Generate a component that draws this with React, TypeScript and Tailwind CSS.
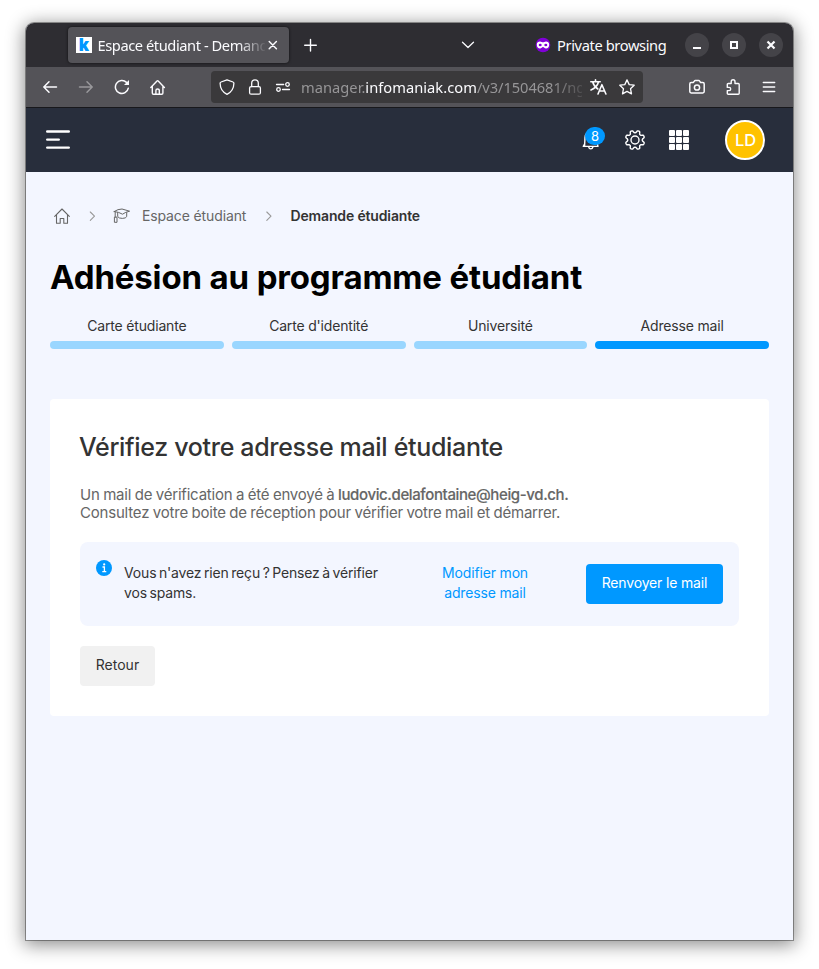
import React from "react";

type IconProps = { className?: string; w: number; h?: number; sw?: number; children: React.ReactNode };

function Icon({ className = "", w, h = w, sw = 1.3, children }: IconProps) {
  return (
    <svg
      className={`shrink-0 ${className}`}
      width={w}
      height={h}
      viewBox={`0 0 ${w} ${h}`}
      fill="none"
      stroke="currentColor"
      strokeWidth={sw}
      strokeLinecap="round"
      strokeLinejoin="round"
    >
      {children}
    </svg>
  );
}

// Outline of an eight-toothed cog with a notch pointing straight up.
const cog =
  "M" +
  Array.from({ length: 128 }, (_, i) => {
    const a = (i / 128) * Math.PI * 2;
    const wave = Math.tanh(-1.8 * Math.cos(8 * a)) / Math.tanh(1.8);
    const r = 8.5 + 1.2 * wave;
    return `${(11 + r * Math.cos(a)).toFixed(2)} ${(11 + r * Math.sin(a)).toFixed(2)}`;
  }).join("L") +
  "Z";

function TabStrip() {
  return (
    <div className="flex h-11 items-center bg-[#2e2d32] pl-[42px] text-[#fbfbfe]">
      <div className="flex h-9 w-[221px] items-center rounded bg-[#545358] pl-2 shadow-[0_0_3px_rgba(0,0,0,0.7)]">
        <div className="flex size-4 items-center justify-center bg-white font-['Inter'] text-[17px] leading-none font-black text-[#0098ff]">
          k
        </div>
        <div className="ml-[5.5px] w-[167.5px] text-[14.67px] leading-5 tracking-[-0.43px] whitespace-nowrap [mask-image:linear-gradient(to_right,black_140px,transparent_169px)]">
          Espace étudiant - Demand
        </div>
        <Icon w={16} sw={1.5}>
          <path d="M4.200 4.500l7.200 7.200M11.400 4.500l-7.200 7.200" />
        </Icon>
      </div>
      <Icon w={16} className="ml-[13px]" sw={1.4}>
        <path d="M8.500 2.500v11.500M2.700 8.300h11.600" />
      </Icon>
      <Icon w={16} className="ml-[142px]">
        <path d="M2.500 5.200L8 10.500l5.500-5.300" />
      </Icon>
      <svg className="ml-[59px] shrink-0" width="16" height="16" viewBox="0 0 16 16">
        <circle cx="8" cy="8" r="7.300" fill="#8000d7" />
        <path
          d="M1.800 7.500C1.800 5.300 3.300 4.400 5 4.400c1.400 0 2 .8 3 .8s1.600-.8 3-.8c1.700 0 3.200.9 3.200 3.100C14.200 10 12.800 11.600 11 11.600c-1.500 0-2-1.500-3-1.500s-1.500 1.500-3 1.500C3.200 11.600 1.800 10 1.800 7.500z"
          fill="white"
        />
        <ellipse cx="5.200" cy="8" rx="1.500" ry="1.300" fill="#8000d7" />
        <ellipse cx="10.800" cy="8" rx="1.500" ry="1.300" fill="#8000d7" />
      </svg>
      <div className="ml-[6px] w-[110px] text-[14.67px] leading-5 tracking-[-0.38px] whitespace-nowrap">Private browsing</div>
      <div className="ml-[18px] flex gap-[13px]">
        <div className="flex size-6 items-center justify-center rounded-full bg-[#444348]">
          <Icon w={16} sw={2}>
            <path d="M4 11h8" strokeLinecap="butt" />
          </Icon>
        </div>
        <div className="flex size-6 items-center justify-center rounded-full bg-[#444348]">
          <Icon w={16} sw={2}>
            <path d="M5 5h6v6H5z" strokeLinejoin="miter" />
          </Icon>
        </div>
        <div className="flex size-6 items-center justify-center rounded-full bg-[#444348]">
          <Icon w={16} sw={2.2}>
            <path d="M4.500 4.500l7 7M11.500 4.500l-7 7" strokeLinecap="butt" />
          </Icon>
        </div>
      </div>
    </div>
  );
}

function NavBar() {
  return (
    <div className="flex h-10 items-center bg-[#545358] pl-4 text-[#fbfbfe]">
      <div className="flex gap-5">
        <Icon w={16} sw={1.5}>
          <path d="M14.500 8H2M7 2.800L1.800 8L7 13.200" />
        </Icon>
        <Icon w={16} sw={1.5} className="text-[#99989b]">
          <path d="M1.500 8H14M9 2.800L14.200 8L9 13.200" />
        </Icon>
        <Icon w={16} sw={1.5}>
          <path d="M14.300 9.200A6.500 6.500 0 1 1 12.500 3.400" />
          <path d="M15 1v5h-5z" fill="currentColor" stroke="none" />
        </Icon>
        <Icon w={16} sw={1.4}>
          <path d="M.8 8.600L7 1.900q.6-.6 1.200 0L14.400 8.600M2.300 7.400v6.700q0 1.200 1.200 1.200h8.200q1.200 0 1.200-1.200V7.400M5.900 15.200v-3.700q0-1.500 1.700-1.500t1.700 1.500v3.700" />
        </Icon>
      </div>
      <div className="ml-[45px] flex h-8 w-[432px] items-center rounded bg-[#3a393b] pl-2">
        <Icon w={16} className="mr-3">
          <path d="M8 .8L14 3q.9.300.9 1.300C14.800 9.500 12.300 13.300 8 15.300C3.700 13.300 1.200 9.500 1.100 4.300q0-1 .9-1.300z" />
        </Icon>
        <Icon w={16} className="mr-3">
          <rect x="2.600" y="7.600" width="10.800" height="7.600" rx="1.500" />
          <path d="M4.700 7.500V4.100a3.300 3.300 0 0 1 6.600 0v3.400" />
        </Icon>
        <Icon w={16} className="mr-[10px]">
          <path d="M1.500 5.500h7.200M7.500 10.500h7" />
          <circle cx="12.500" cy="5.500" r="1.800" />
          <circle cx="3.500" cy="10.500" r="1.800" />
        </Icon>
        <div className="w-[281px] text-[14.67px] leading-5 tracking-[0.03px] whitespace-nowrap text-[#969597] [mask-image:linear-gradient(to_right,black_250px,transparent_290px)]">
          manager.<span className="text-[#fbfbfe]">infomaniak.com</span>
          <span className="tracking-[-0.05px]">/v3/1504681/ng</span>
        </div>
        <Icon w={17} h={16} className="ml-[8px] mr-3" sw={1.600}>
          <path d="M.8 2.700h9.400M5.500.800v1.900M8.500 3C7.700 6 4.500 9.500 1 11M2.700 3C3.500 6 5.500 8.500 7.800 10M8 15l3.900-9.300L15.900 15M9.300 12h5.300" />
        </Icon>
        <Icon w={16}>
          <path d="M8 .900l2.200 4.700 5 .6-3.700 3.500 1 5.200L8 12.400 3.500 14.900l1-5.200L.8 6.200l5-.6z" />
        </Icon>
      </div>
      <div className="ml-[46px] flex gap-5">
        <Icon w={16} sw={1.5}>
          <path d="M.8 5q0-1.400 1.400-1.400h2L5.300 2.200q.4-.7 1.100-.7h3.200q.7 0 1.100.7l.9 1.400h2.200Q15.200 3.600 15.200 5v7.600q0 1.400-1.400 1.400H2.200Q.8 14 .8 12.600z" />
          <circle cx="8" cy="8.500" r="2.600" />
        </Icon>
        <Icon w={16} sw={1.4}>
          <path d="M6.200 4.500V2.700a1.900 1.900 0 0 1 3.800 0V4.500h3.200q1 0 1 1v8.700q0 1-1 1H3.300q-1 0-1-1v-2.600h1.800a1.600 1.600 0 0 0 0-3.200H2.300V5.500q0-1 1-1z" />
        </Icon>
        <Icon w={16} sw={1.4}>
          <path d="M2.300 3.500h11.400M2.300 8h11.400M2.300 12.500h11.400" />
        </Icon>
      </div>
    </div>
  );
}

function AppHeader() {
  return (
    <div className="flex h-[65px] items-center border-t border-[#18181c] bg-[#282e3c] pl-5 text-white">
      <Icon w={24} sw={2.400}>
        <path d="M1.200 3.500h21.600M1.200 11.600h11.600M1.200 19.600h21.600" />
      </Icon>
      <div className="relative ml-[511px] flex h-6 w-6 items-center">
        <Icon w={20} h={22} sw={1.400}>
          <path d="M3.600 16.500L4 8.500a6 6 0 0 1 12 0v5.200l1 3.700H2.300l1.400-2.500M7.500 17.700q.5 2.200 2.300 2.200t2.300-2.200" />
        </Icon>
        <div className="absolute top-[-1px] left-1 flex h-[18px] w-5 items-center justify-center rounded-full bg-[#0098ff] font-['Inter'] text-[13px] leading-4">
          8
        </div>
      </div>
      <Icon w={22} className="mb-[1px] ml-[19px]" sw={1.400}>
        <circle cx="11" cy="11" r="4" />
        <path d={cog} />
      </Icon>
      <div className="ml-[23px] grid grid-cols-3 gap-[1.5px]">
        {Array.from({ length: 9 }, (_, i) => (
          <div key={i} className="size-[5.7px] rounded-[1px] bg-white" />
        ))}
      </div>
      <div className="ml-9 flex size-10 items-center justify-center rounded-full border-2 border-white bg-[#ffc200] pl-px font-['Inter'] text-[16.5px] font-medium">
        LD
      </div>
    </div>
  );
}

function Breadcrumb() {
  return (
    <div className="flex h-6 items-center text-sm text-[#666]">
      <Icon w={16} className="ml-1" sw={1.1}>
        <path d="M.7 8.300L8 1l7.300 7.300M2.500 7v8.300h3.700v-4.800h3.600v4.800h3.700V7" />
      </Icon>
      <Icon w={8} h={12} className="ml-[18px] text-[#999]" sw={1.1}>
        <path d="M2.300 2L6.500 6.200 2.300 10.400" />
      </Icon>
      <Icon w={18} h={16} className="ml-[17px]" sw={1}>
        <path d="M1.200 3.500Q5 1 9 1l7.600 2.200Q12.500 4 9.500 6.200 6 4 1.200 3.500zM4.700 4.600v4q1 1.800 4.600 1.800t4.400-1.800V4.600M2.200 4v5.200M1.400 9.500v4.800h2.600V9.500z" />
      </Icon>
      <span className="ml-[11px] w-[105px] tracking-[-0.13px] whitespace-nowrap">Espace étudiant</span>
      <Icon w={8} h={12} className="ml-[18px] text-[#999]" sw={1.1}>
        <path d="M1.800 2L6 6.200 1.800 10.400" />
      </Icon>
      <span className="ml-[17.5px] font-semibold whitespace-nowrap tracking-[-0.15px] text-[#333]">Demande étudiante</span>
    </div>
  );
}

const steps = [
  { label: "Carte étudiante", bar: "bg-[#99d6ff]" },
  { label: "Carte d'identité", bar: "bg-[#99d6ff]" },
  { label: "Université", bar: "bg-[#99d6ff]" },
  { label: "Adresse mail", bar: "bg-[#0098ff]" },
];

export default function App() {
  return (
    <div className="h-[969px] w-[819px] overflow-hidden bg-white px-[26px] pt-[23px] font-['Noto_Sans',sans-serif]">
      <div className="h-[917px] w-[767px] overflow-hidden rounded-t-lg bg-[#f3f6ff] shadow-[0_0_0_1px_rgba(0,0,0,0.35),0_3px_18px_2px_rgba(0,0,0,0.45)]">
        <TabStrip />
        <NavBar />
        <AppHeader />
        <main className="px-6 pt-8 font-['Inter',sans-serif]">
          <Breadcrumb />
          <h1 className="mt-[29px] text-[33px] leading-10 font-bold tracking-[-0.15px] whitespace-nowrap text-black">Adhésion au programme étudiant</h1>
          <div className="mt-[19px] grid grid-cols-4 gap-2">
            {steps.map((s) => (
              <div key={s.label} className="text-center text-sm leading-5 tracking-[-0.18px] text-[#333]">
                {s.label}
                <div className={`mt-[5px] h-2 rounded-full ${s.bar}`} />
              </div>
            ))}
          </div>
          <section className="mt-[50px] h-[317px] rounded bg-white px-[30px] pt-[32px]">
            <h2 className="-ml-px text-[25px] leading-8 font-medium tracking-[-0.32px] whitespace-nowrap text-[#333]">Vérifiez votre adresse mail étudiante</h2>
            <p className="mt-[23px] text-[15px] leading-[18px] tracking-[-0.2px] [word-spacing:-0.5px] whitespace-nowrap text-[#666]">
              Un mail de vérification a été envoyé à{" "}
              <span className="font-medium tracking-[-0.38px] [-webkit-text-stroke:0.15px_#666]">ludovic.delafontaine@heig-vd.ch.</span>
              <br />
              Consultez votre boite de réception pour vérifier votre mail et démarrer.
            </p>
            <div className="mt-5 flex h-[84px] rounded-lg bg-[#f3f6ff] px-4 text-sm leading-5 tracking-[-0.16px]">
              <svg className="mt-[18px] shrink-0" width="16" height="16" viewBox="0 0 16 16">
                <circle cx="8" cy="8" r="8" fill="#0098ff" />
                <circle cx="8.200" cy="4.400" r="1.100" fill="white" />
                <path d="M6.500 7h1.900v4.600M6.300 11.600h4" fill="none" stroke="white" strokeWidth="1.300" />
              </svg>
              <p className="mt-[21px] ml-3 w-[262px] [word-spacing:-1.2px] whitespace-nowrap text-[#333]">
                Vous n'avez rien reçu ? Pensez à vérifier
                <br />
                vos spams.
              </p>
              <a className="mt-[21px] ml-[49px] w-[100px] text-center whitespace-nowrap text-[#0098ff]">
                Modifier mon
                <br />
                adresse mail
              </a>
              <button className="mt-[22px] ml-auto h-10 w-[137px] rounded bg-[#0098ff] pb-[2px] whitespace-nowrap text-white">Renvoyer le mail</button>
            </div>
            <button className="mt-5 h-10 w-[75px] rounded bg-[#f1f1f1] pb-[2px] text-sm text-[#333]">Retour</button>
          </section>
        </main>
      </div>
    </div>
  );
}
